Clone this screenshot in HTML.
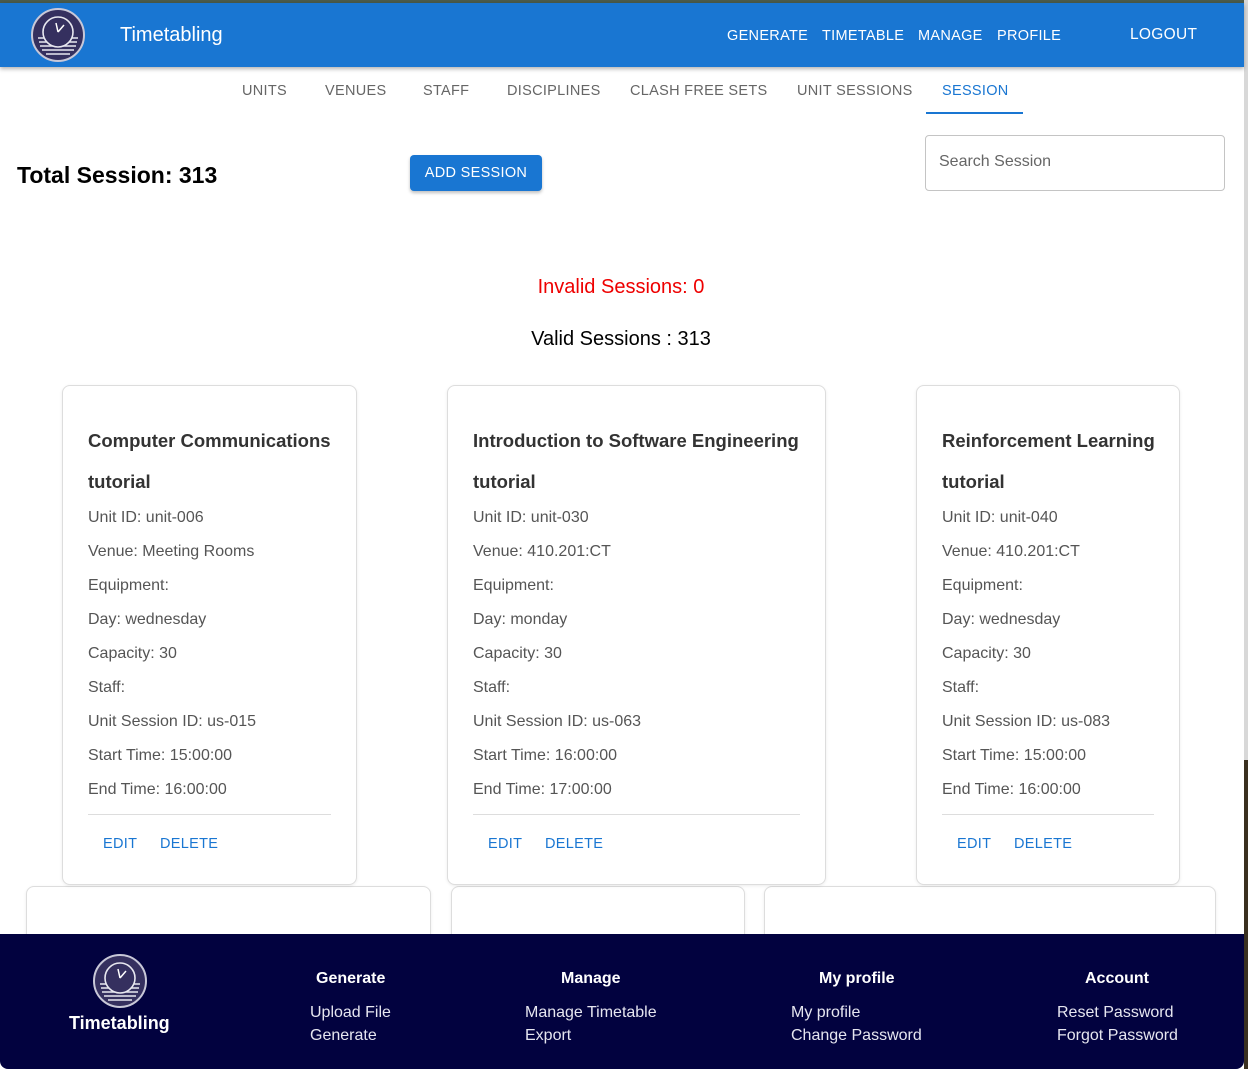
<!DOCTYPE html>
<html><head><meta charset="utf-8"><style>
*{margin:0;padding:0;box-sizing:border-box}
body{width:1248px;height:1069px;overflow:hidden;background:#fff;font-family:"Liberation Sans",sans-serif;position:relative}
.a{position:absolute;white-space:nowrap}
.hdr{position:absolute;left:0;top:3px;width:1244px;height:64px;background:#1976d2;box-shadow:0 2px 4px rgba(0,0,0,.3)}
.nav{color:#fff;font-size:14.5px;letter-spacing:.3px;line-height:20px;top:26px}
.tab{color:#666;font-size:14.5px;letter-spacing:.3px;line-height:20px;top:81px}
.card{position:absolute;border:1px solid #ddd;border-radius:8px;background:#fff;box-shadow:0 1px 3px rgba(0,0,0,.08)}
.t{position:absolute;left:25px;font-size:18.5px;font-weight:bold;color:#333;line-height:24px;white-space:nowrap}
.l{position:absolute;left:25px;font-size:16px;color:#555;line-height:20px;white-space:nowrap}
.hr{position:absolute;left:25px;right:25px;top:428px;border-top:1px solid #ddd}
.b{position:absolute;top:448px;font-size:14.5px;color:#1976d2;letter-spacing:.3px;line-height:20px}
.foot{position:absolute;left:0;top:934px;width:1244px;height:135px;background:#02023f;border-radius:0 0 8px 8px}
.fh{color:#fff;font-weight:bold;font-size:16px;line-height:20px}
.fl{color:#e6e6f0;font-size:16px;line-height:23px}
</style></head><body>
<div class="a" style="left:0;top:0;width:1248px;height:3px;background:#4a5a4a"></div>
<div class="a" style="left:1244px;top:0;width:4px;height:1069px;background:#d8d8d8"></div>
<div class="a" style="left:1244px;top:760px;width:4px;height:309px;background:#3a3020"></div>
<div class="hdr"></div>
<svg class="a" style="left:31px;top:8px" width="54" height="54" viewBox="0 0 54 54">
<circle cx="27" cy="27" r="26" fill="#35305f" stroke="#c8c8d8" stroke-width="2"/>
<g stroke="#e8e8f0" stroke-width="1.6"><line x1="7" y1="30" x2="47" y2="30"/><line x1="8" y1="34" x2="46" y2="34"/><line x1="9" y1="38" x2="45" y2="38"/><line x1="11" y1="42" x2="43" y2="42"/><line x1="15" y1="46" x2="39" y2="46"/></g>
<circle cx="27" cy="24" r="15" fill="#35305f" stroke="#e8e8f0" stroke-width="1.6"/>
<path d="M27 24 L33 17 M27 24 L25 15" stroke="#fff" stroke-width="1.5"/>
</svg>
<div class="a" style="left:120px;top:23px;color:#fff;font-size:20px;line-height:24px">Timetabling</div>
<div class="a nav" style="left:727px">GENERATE</div>
<div class="a nav" style="left:822px">TIMETABLE</div>
<div class="a nav" style="left:918px">MANAGE</div>
<div class="a nav" style="left:997px">PROFILE</div>
<div class="a nav" style="left:1130px;font-size:15.5px;top:25px">LOGOUT</div>

<div class="a tab" style="left:242px">UNITS</div>
<div class="a tab" style="left:325px">VENUES</div>
<div class="a tab" style="left:423px">STAFF</div>
<div class="a tab" style="left:507px">DISCIPLINES</div>
<div class="a tab" style="left:630px">CLASH FREE SETS</div>
<div class="a tab" style="left:797px">UNIT SESSIONS</div>
<div class="a tab" style="left:942px;color:#1976d2">SESSION</div>
<div class="a" style="left:926px;top:112px;width:97px;height:2px;background:#1976d2"></div>

<div class="a" style="left:17px;top:161px;font-size:23px;font-weight:bold;color:#000;line-height:28px">Total Session: 313</div>
<div class="a" style="left:410px;top:155px;width:132px;height:36px;background:#1976d2;border-radius:4px;box-shadow:0 2px 3px rgba(0,0,0,.25);color:#fff;font-size:14.5px;letter-spacing:.3px;text-align:center;line-height:37px">ADD SESSION</div>
<div class="a" style="left:925px;top:135px;width:300px;height:56px;border:1px solid #c4c4c4;border-radius:4px"></div>
<div class="a" style="left:939px;top:152px;font-size:16px;color:#666;line-height:20px">Search Session</div>

<div class="a" style="left:0;width:1242px;top:275px;text-align:center;color:#e00;font-size:20px;line-height:24px">Invalid Sessions: 0</div>
<div class="a" style="left:0;width:1242px;top:327px;text-align:center;color:#000;font-size:20px;line-height:24px">Valid Sessions : 313</div>

<div class="card" style="left:26px;top:886px;width:405px;height:80px"></div>
<div class="card" style="left:451px;top:886px;width:294px;height:80px"></div>
<div class="card" style="left:764px;top:886px;width:452px;height:80px"></div>

<div class="card" style="left:62px;top:385px;width:295px;height:500px">
<div class="t" style="top:43px">Computer Communications</div>
<div class="t" style="top:84px">tutorial</div>
<div class="l" style="top:122px">Unit ID: unit-006</div>
<div class="l" style="top:156px">Venue: Meeting Rooms</div>
<div class="l" style="top:190px">Equipment:</div>
<div class="l" style="top:224px">Day: wednesday</div>
<div class="l" style="top:258px">Capacity: 30</div>
<div class="l" style="top:292px">Staff:</div>
<div class="l" style="top:326px">Unit Session ID: us-015</div>
<div class="l" style="top:360px">Start Time: 15:00:00</div>
<div class="l" style="top:394px">End Time: 16:00:00</div>
<div class="hr"></div>
<div class="b" style="left:40px">EDIT</div><div class="b" style="left:97px">DELETE</div>
</div>

<div class="card" style="left:447px;top:385px;width:379px;height:500px">
<div class="t" style="top:43px">Introduction to Software Engineering</div>
<div class="t" style="top:84px">tutorial</div>
<div class="l" style="top:122px">Unit ID: unit-030</div>
<div class="l" style="top:156px">Venue: 410.201:CT</div>
<div class="l" style="top:190px">Equipment:</div>
<div class="l" style="top:224px">Day: monday</div>
<div class="l" style="top:258px">Capacity: 30</div>
<div class="l" style="top:292px">Staff:</div>
<div class="l" style="top:326px">Unit Session ID: us-063</div>
<div class="l" style="top:360px">Start Time: 16:00:00</div>
<div class="l" style="top:394px">End Time: 17:00:00</div>
<div class="hr"></div>
<div class="b" style="left:40px">EDIT</div><div class="b" style="left:97px">DELETE</div>
</div>

<div class="card" style="left:916px;top:385px;width:264px;height:500px">
<div class="t" style="top:43px">Reinforcement Learning</div>
<div class="t" style="top:84px">tutorial</div>
<div class="l" style="top:122px">Unit ID: unit-040</div>
<div class="l" style="top:156px">Venue: 410.201:CT</div>
<div class="l" style="top:190px">Equipment:</div>
<div class="l" style="top:224px">Day: wednesday</div>
<div class="l" style="top:258px">Capacity: 30</div>
<div class="l" style="top:292px">Staff:</div>
<div class="l" style="top:326px">Unit Session ID: us-083</div>
<div class="l" style="top:360px">Start Time: 15:00:00</div>
<div class="l" style="top:394px">End Time: 16:00:00</div>
<div class="hr"></div>
<div class="b" style="left:40px">EDIT</div><div class="b" style="left:97px">DELETE</div>
</div>

<div class="foot"></div>
<svg class="a" style="left:93px;top:954px" width="54" height="54" viewBox="0 0 54 54">
<circle cx="27" cy="27" r="26" fill="#35305f" stroke="#c8c8d8" stroke-width="2"/>
<g stroke="#e8e8f0" stroke-width="1.6"><line x1="7" y1="30" x2="47" y2="30"/><line x1="8" y1="34" x2="46" y2="34"/><line x1="9" y1="38" x2="45" y2="38"/><line x1="11" y1="42" x2="43" y2="42"/><line x1="15" y1="46" x2="39" y2="46"/></g>
<circle cx="27" cy="24" r="15" fill="#35305f" stroke="#e8e8f0" stroke-width="1.6"/>
<path d="M27 24 L33 17 M27 24 L25 15" stroke="#fff" stroke-width="1.5"/>
</svg>
<div class="a" style="left:69px;top:1012px;color:#fff;font-weight:bold;font-size:18px;line-height:22px">Timetabling</div>
<div class="a fh" style="left:316px;top:969px">Generate</div>
<div class="a fl" style="left:310px;top:1001px">Upload File<br>Generate</div>
<div class="a fh" style="left:561px;top:969px">Manage</div>
<div class="a fl" style="left:525px;top:1001px">Manage Timetable<br>Export</div>
<div class="a fh" style="left:819px;top:969px">My profile</div>
<div class="a fl" style="left:791px;top:1001px">My profile<br>Change Password</div>
<div class="a fh" style="left:1085px;top:969px">Account</div>
<div class="a fl" style="left:1057px;top:1001px">Reset Password<br>Forgot Password</div>
</body></html>
